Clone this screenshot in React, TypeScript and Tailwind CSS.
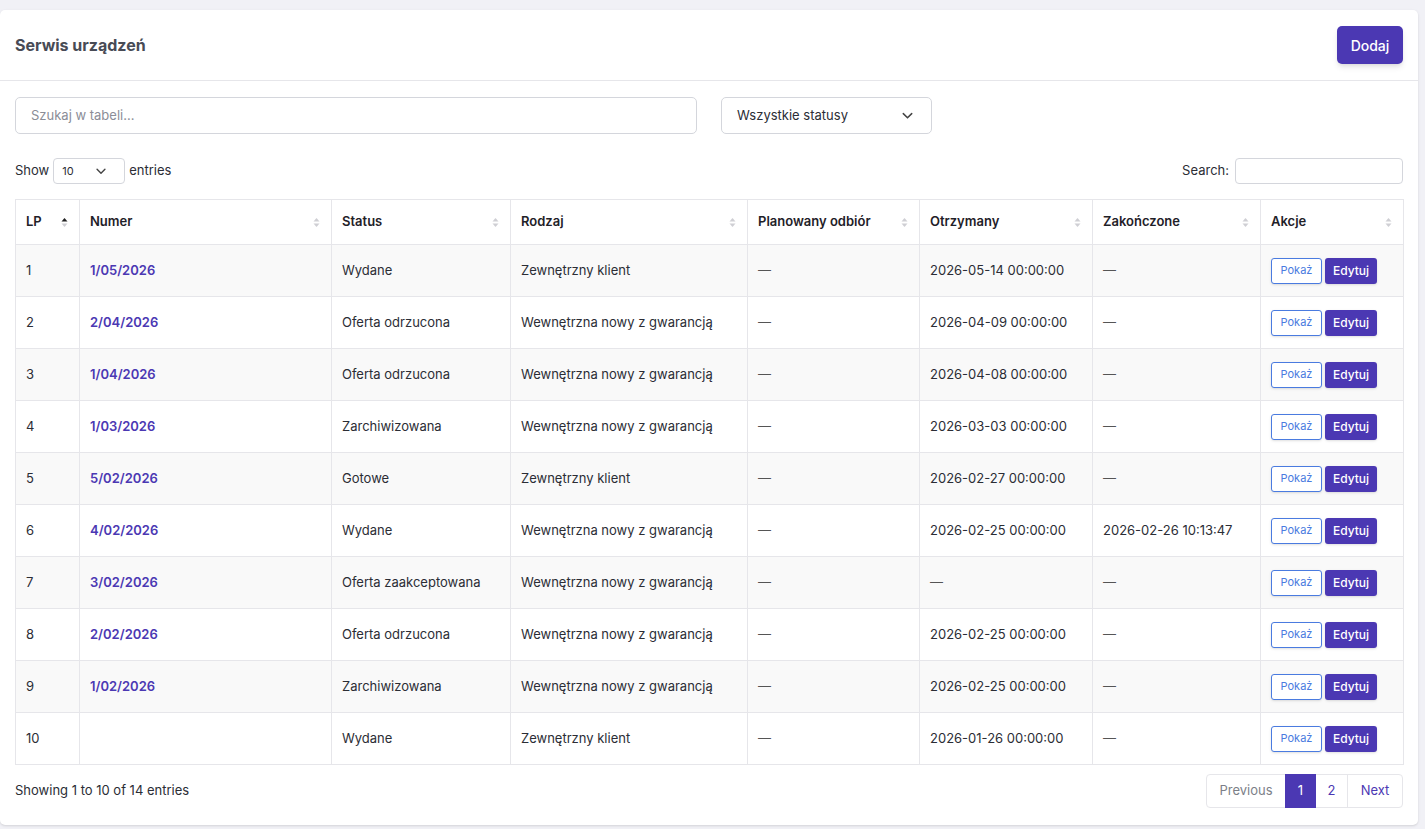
import React from "react";

const rows = [
  ["1", "1/05/2026", "Wydane", "Zewnętrzny klient", "—", "2026-05-14 00:00:00", "—"],
  ["2", "2/04/2026", "Oferta odrzucona", "Wewnętrzna nowy z gwarancją", "—", "2026-04-09 00:00:00", "—"],
  ["3", "1/04/2026", "Oferta odrzucona", "Wewnętrzna nowy z gwarancją", "—", "2026-04-08 00:00:00", "—"],
  ["4", "1/03/2026", "Zarchiwizowana", "Wewnętrzna nowy z gwarancją", "—", "2026-03-03 00:00:00", "—"],
  ["5", "5/02/2026", "Gotowe", "Zewnętrzny klient", "—", "2026-02-27 00:00:00", "—"],
  ["6", "4/02/2026", "Wydane", "Wewnętrzna nowy z gwarancją", "—", "2026-02-25 00:00:00", "2026-02-26 10:13:47"],
  ["7", "3/02/2026", "Oferta zaakceptowana", "Wewnętrzna nowy z gwarancją", "—", "—", "—"],
  ["8", "2/02/2026", "Oferta odrzucona", "Wewnętrzna nowy z gwarancją", "—", "2026-02-25 00:00:00", "—"],
  ["9", "1/02/2026", "Zarchiwizowana", "Wewnętrzna nowy z gwarancją", "—", "2026-02-25 00:00:00", "—"],
  ["10", "", "Wydane", "Zewnętrzny klient", "—", "2026-01-26 00:00:00", "—"],
];

const headers = ["LP", "Numer", "Status", "Rodzaj", "Planowany odbiór", "Otrzymany", "Zakończone", "Akcje"];
const widths = [64, 252, 179, 237, 172, 173, 168, 143];

function SortIcon({ active }: { active?: boolean }) {
  return (
    <svg width="7" height="11" viewBox="0 0 7 11" className="shrink-0">
      <path d="M3.5 1 L6.5 4.5 L0.5 4.5 Z" fill={active ? "#222" : "#cfcfd4"} />
      <path d="M3.5 10 L6.5 6.5 L0.5 6.5 Z" fill="#cfcfd4" />
    </svg>
  );
}

function Chevron({ size = 14 }: { size?: number }) {
  return (
    <svg width={size} height={size} viewBox="0 0 16 16" fill="none">
      <path d="M3.5 6 L8 10.5 L12.5 6" stroke="#444" strokeWidth="1.6" strokeLinecap="round" strokeLinejoin="round" />
    </svg>
  );
}

export default function App() {
  return (
    <div
      className="w-[1425px] h-[829px] bg-[#f1f1f6] pt-[10px] pr-[7px] overflow-hidden"
      style={{ fontFamily: "Inter, 'Noto Sans', sans-serif" }}
    >
      <div className="bg-white rounded-[5px] shadow-sm h-[815px] flex flex-col">
        <div className="h-[71px] px-[15px] flex items-center justify-between border-b border-[#e6e6ea]">
          <h1 className="text-[16px] font-bold text-[#484b55]">Serwis urządzeń</h1>
          <button className="w-[66px] h-[38px] rounded-[5px] bg-[#4b38b3] text-white text-[14px] font-medium shadow-md">
            Dodaj
          </button>
        </div>
        <div className="px-[15px] pt-[16px]">
          <div className="flex items-center gap-[24px]">
            <div className="w-[682px] h-[37px] border border-[#d4d6dc] rounded-[5px] flex items-center px-[15px] text-[13px] text-[#8b8d97]">
              Szukaj w tabeli...
            </div>
            <div className="w-[211px] h-[37px] border border-[#d4d6dc] rounded-[5px] flex items-center justify-between pl-[15px] pr-[16px] text-[13px] text-[#2b2d35]">
              <span>Wszystkie statusy</span>
              <Chevron size={15} />
            </div>
          </div>
          <div className="mt-[24px] flex items-center justify-between h-[26px] text-[13px] text-[#2b2d35]">
            <div className="flex items-center">
              <span>Show</span>
              <div className="ml-[4px] w-[72px] h-[26px] border border-[#d4d6dc] rounded-[4px] flex items-center justify-between pl-[8px] pr-[16px] text-[11px]">
                <span>10</span>
                <Chevron size={14} />
              </div>
              <span className="ml-[4px]">entries</span>
            </div>
            <div className="flex items-center">
              <span>Search:</span>
              <div className="ml-[6px] w-[168px] h-[26px] border border-[#d4d6dc] rounded-[4px]" />
            </div>
          </div>
          <table className="mt-[15px] w-[1388px] table-fixed border-collapse text-[13px] text-[#2b2d35]">
            <colgroup>
              {widths.map((w, i) => (
                <col key={i} style={{ width: w }} />
              ))}
            </colgroup>
            <thead>
              <tr className="h-[45px]">
                {headers.map((h, i) => (
                  <th key={h} className="border border-[#e6e6ea] px-[10px] text-left font-semibold text-[#1f2128]">
                    <div className="flex items-center justify-between pr-[1px]">
                      <span>{h}</span>
                      <SortIcon active={i === 0} />
                    </div>
                  </th>
                ))}
              </tr>
            </thead>
            <tbody>
              {rows.map((r, idx) => (
                <tr key={idx} className={`h-[52px] ${idx % 2 === 0 ? "bg-[#f9f9f9]" : "bg-white"}`}>
                  <td className="border border-[#e6e6ea] px-[10px]">{r[0]}</td>
                  <td className="border border-[#e6e6ea] px-[10px] font-semibold text-[#4b38b3]">{r[1]}</td>
                  <td className="border border-[#e6e6ea] px-[10px]">{r[2]}</td>
                  <td className="border border-[#e6e6ea] px-[10px]">{r[3]}</td>
                  <td className="border border-[#e6e6ea] px-[10px] text-[#555]">{r[4]}</td>
                  <td className={`border border-[#e6e6ea] px-[10px] ${r[5] === "—" ? "text-[#555]" : ""}`}>{r[5]}</td>
                  <td className={`border border-[#e6e6ea] px-[10px] ${r[6] === "—" ? "text-[#555]" : ""}`}>{r[6]}</td>
                  <td className="border border-[#e6e6ea] px-[10px]">
                    <div className="flex items-center gap-[3px]">
                      <button className="w-[51px] h-[26px] rounded-[3px] border border-[#4a7be0] bg-white text-[#4a7be0] text-[11px] shadow-sm">
                        Pokaż
                      </button>
                      <button className="w-[52px] h-[26px] rounded-[3px] bg-[#4b38b3] text-white text-[12px] font-medium shadow-sm">
                        Edytuj
                      </button>
                    </div>
                  </td>
                </tr>
              ))}
            </tbody>
          </table>
          <div className="mt-[9px] flex items-center justify-between">
            <span className="text-[13px] text-[#2b2d35]">Showing 1 to 10 of 14 entries</span>
            <div className="flex h-[34px] border border-[#e6e6ea] rounded-[4px] text-[13px]">
              <span className="w-[78px] flex items-center justify-center text-[#7c7f88]">Previous</span>
              <span className="w-[31px] flex items-center justify-center bg-[#4b38b3] text-white -my-px">1</span>
              <span className="w-[32px] flex items-center justify-center text-[#4b38b3] border-r border-[#e6e6ea]">2</span>
              <span className="w-[54px] flex items-center justify-center text-[#4b38b3]">Next</span>
            </div>
          </div>
        </div>
      </div>
    </div>
  );
}
